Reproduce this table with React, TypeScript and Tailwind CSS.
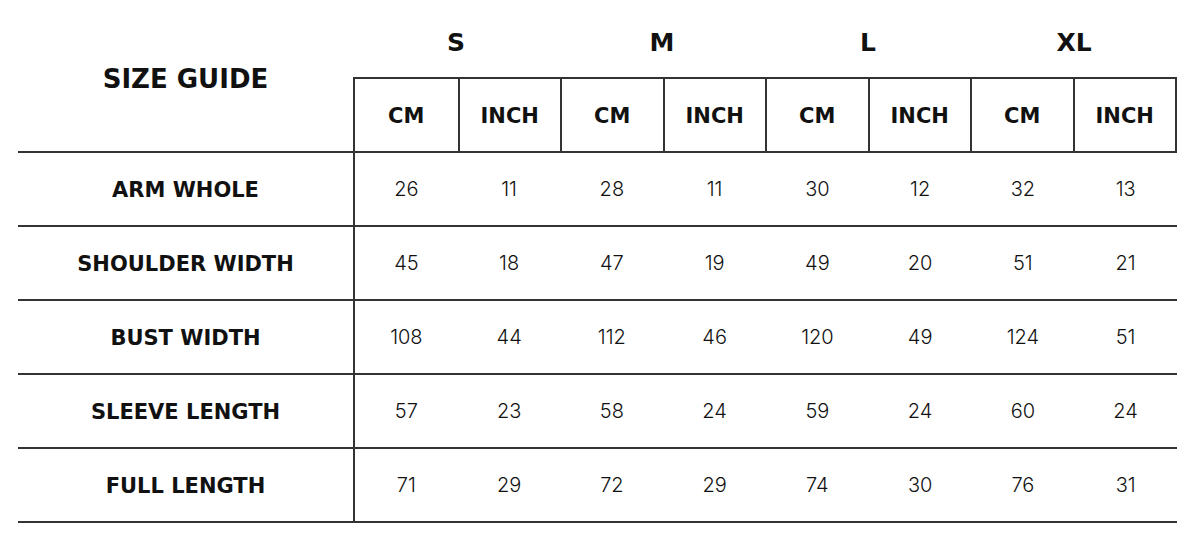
const sizes = ['S', 'M', 'L', 'XL'];

const rows: { label: string; values: number[] }[] = [
  { label: 'ARM WHOLE', values: [26, 11, 28, 11, 30, 12, 32, 13] },
  { label: 'SHOULDER WIDTH', values: [45, 18, 47, 19, 49, 20, 51, 21] },
  { label: 'BUST WIDTH', values: [108, 44, 112, 46, 120, 49, 124, 51] },
  { label: 'SLEEVE LENGTH', values: [57, 23, 58, 24, 59, 24, 60, 24] },
  { label: 'FULL LENGTH', values: [71, 29, 72, 29, 74, 30, 76, 31] },
];

const body = { fontFamily: 'Inter, "Noto Sans", sans-serif' };
const heading = { fontFamily: '"DejaVu Sans", Inter, sans-serif' };

export default function App() {
  return (
    <div className="w-[1200px] h-[537px] bg-white text-[#111]" style={body}>
      <div className="pl-[18px] pr-[23px]">
        <div className="flex border-b-2 border-[#333]">
          <div className="w-[335px] flex items-center justify-center pt-[8px]">
            <span className="text-[26px] font-bold" style={heading}>
              SIZE GUIDE
            </span>
          </div>
          <div className="flex-1 flex flex-col">
            <div className="h-[77px] grid grid-cols-4 items-center pt-[8px]">
              {sizes.map((s) => (
                <div key={s} className="text-center text-[25px] font-bold" style={heading}>
                  {s}
                </div>
              ))}
            </div>
            <div className="h-[74px] grid grid-cols-8 border-t-2 border-x-2 border-[#333]">
              {sizes.map((s, i) =>
                ['CM', 'INCH'].map((u, j) => (
                  <div
                    key={s + u}
                    className={`flex items-center justify-center pt-[3px] text-[21px] font-bold ${
                      i === 0 && j === 0 ? '' : 'border-l-2 border-[#333]'
                    }`}
                    style={heading}
                  >
                    {u}
                  </div>
                ))
              )}
            </div>
          </div>
        </div>
        {rows.map((r) => (
          <div key={r.label} className="flex h-[74px] border-b-2 border-[#333]">
            <div
              className="w-[335px] flex items-center justify-center pt-[3px] text-[21px] font-bold"
              style={heading}
            >
              {r.label}
            </div>
            <div className="flex-1 grid grid-cols-8 border-l-2 border-[#333]">
              {r.values.map((v, i) => (
                <div key={i} className="flex items-center justify-center text-[20px] font-light">
                  {v}
                </div>
              ))}
            </div>
          </div>
        ))}
      </div>
    </div>
  );
}
